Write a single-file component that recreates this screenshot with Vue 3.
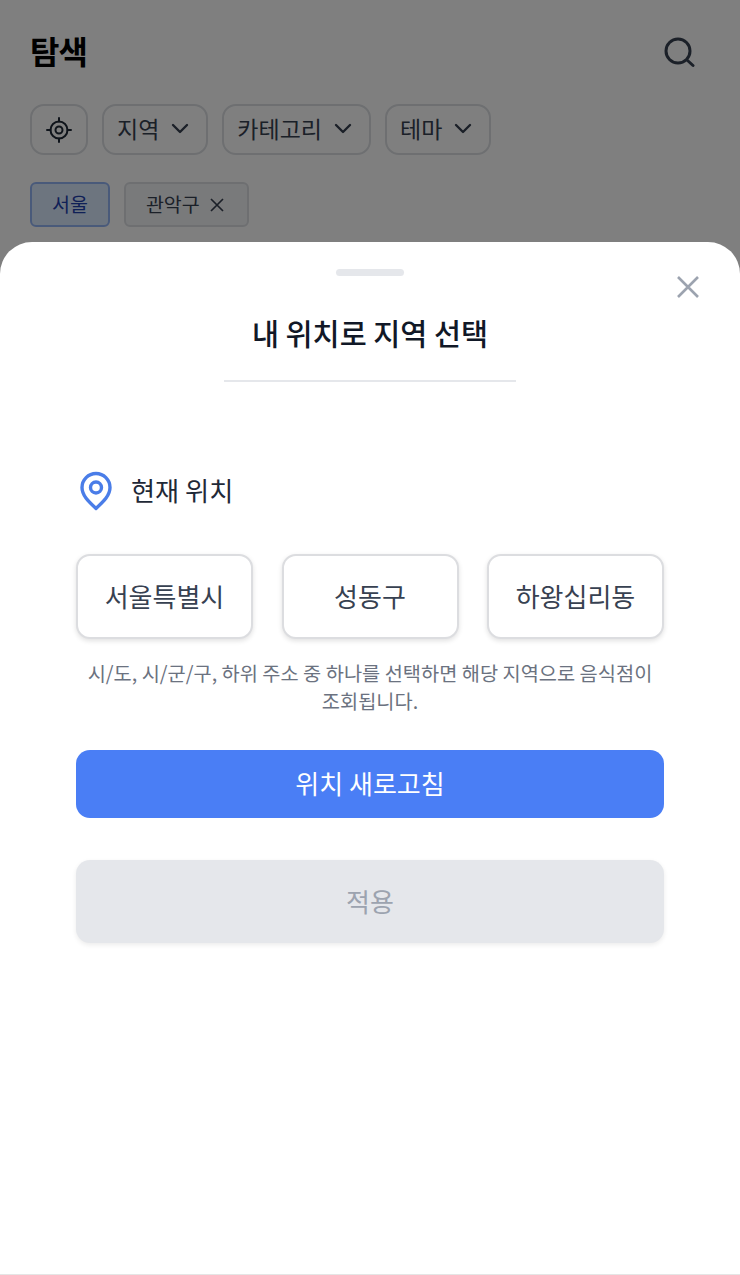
<template>
  <div class="screen">
    <div class="page">
      <header class="page__header">
        <h1 class="page__title">탐색</h1>
        <svg class="page__search" width="31" height="31" viewBox="0 0 31 31" fill="none" stroke="currentColor" stroke-width="3" stroke-linecap="round">
          <circle cx="14" cy="14" r="12" />
          <path d="M23 23l6 5.5" />
        </svg>
      </header>

      <div class="filters">
        <button class="filter filter--icon" type="button">
          <svg width="26" height="26" viewBox="0 0 26 26" fill="none" stroke="currentColor" stroke-width="2" stroke-linecap="round">
            <circle cx="13" cy="13" r="8.5" />
            <circle cx="13" cy="13" r="3.5" />
            <path d="M13 1v3.5M13 21.5V25M1 13h3.5M21.5 13H25" />
          </svg>
        </button>
        <button v-for="f in filters" :key="f" class="filter" type="button">
          {{ f }}
          <svg width="18" height="12" viewBox="0 0 18 12" fill="none" stroke="currentColor" stroke-width="2.4" stroke-linecap="round" stroke-linejoin="round">
            <path d="M2 2l7 7 7-7" />
          </svg>
        </button>
      </div>

      <div class="tags">
        <span class="tag tag--active">서울</span>
        <span class="tag">
          관악구
          <svg width="14" height="14" viewBox="0 0 14 14" fill="none" stroke="currentColor" stroke-width="1.7">
            <path d="M1 1l12 12M13 1L1 13" />
          </svg>
        </span>
      </div>
    </div>

    <div class="overlay"></div>

    <section class="sheet">
      <div class="sheet__handle"></div>
      <button class="sheet__close" type="button">
        <svg width="24" height="24" viewBox="0 0 24 24" fill="none" stroke="currentColor" stroke-width="2.6">
          <path d="M2 2l20 20M22 2L2 22" />
        </svg>
      </button>
      <h2 class="sheet__title">내 위치로 지역 선택</h2>
      <div class="sheet__divider"></div>

      <div class="sheet__body">
        <div class="location">
          <svg width="34" height="40" viewBox="0 0 34 40" fill="none" stroke="#4a7de8" stroke-width="3.4" stroke-linejoin="round">
            <path d="M17 37.5C9.5 30.5 3 24.5 3 16.5a14 14 0 0 1 28 0c0 8-6.5 14-14 21z" />
            <circle cx="17" cy="16.5" r="5.5" />
          </svg>
          <span class="location__label">현재 위치</span>
        </div>

        <div class="regions">
          <button v-for="r in regions" :key="r" class="region" type="button">{{ r }}</button>
        </div>

        <p class="hint">시/도, 시/군/구, 하위 주소 중 하나를 선택하면 해당 지역으로 음식점이 조회됩니다.</p>

        <button class="btn btn--primary" type="button">위치 새로고침</button>
        <button class="btn btn--disabled" type="button">적용</button>
      </div>
    </section>

    <div class="bottom-line"></div>
  </div>
</template>

<script setup>
const filters = ['지역', '카테고리', '테마']
const regions = ['서울특별시', '성동구', '하왕십리동']
</script>

<style>
html, body { margin: 0; background: #fff; }
</style>

<style scoped>
.screen {
  position: relative;
  width: 740px;
  height: 1275px;
  overflow: hidden;
  background: #fff;
  font-family: "Noto Sans CJK KR", "Noto Sans", sans-serif;
  color: #1f2430;
}
button { font-family: inherit; padding: 0; }

.page { padding: 0 30px; }
.page__header {
  display: flex;
  align-items: center;
  justify-content: space-between;
  height: 104px;
  padding-right: 15px;
}
.page__title {
  margin: 0 0 4px;
  font-size: 32px;
  font-weight: 700;
  letter-spacing: -1px;
  color: #000;
}
.page__search { color: #374151; }

.filters { display: flex; gap: 14px; }
.filter {
  display: flex;
  align-items: center;
  gap: 12px;
  height: 51px;
  padding: 0 17px 3px 13px;
  background: #fff;
  border: 2px solid #dcdfe3;
  border-radius: 14px;
  font-size: 23px;
  color: #374151;
}
.filter svg { margin-top: 2px; }
.filter--icon { width: 58px; justify-content: center; padding: 0; color: #1f2937; }
.filter--icon svg { margin-top: 0; }

.tags { display: flex; gap: 14px; margin-top: 27px; }
.tag {
  display: flex;
  align-items: center;
  gap: 10px;
  box-sizing: border-box;
  height: 45px;
  padding: 0 23px 2px 20px;
  background: #f3f4f6;
  border: 2px solid #dcdfe3;
  border-radius: 6px;
  font-size: 19.5px;
  color: #374151;
}
.tag svg { margin-top: 2px; }
.tag--active {
  padding: 0 20px 2px;
  background: #dbeafe;
  border-color: #93b4f5;
  color: #1e40af;
}

.overlay {
  position: absolute;
  inset: 0;
  background: rgba(0, 0, 0, 0.5);
}

.sheet {
  position: absolute;
  left: 0;
  right: 0;
  top: 242px;
  bottom: 0;
  background: #fff;
  border-radius: 32px 32px 0 0;
}
.sheet__handle {
  width: 68px;
  height: 7px;
  margin: 27px auto 0;
  background: #e5e7eb;
  border-radius: 4px;
}
.sheet__close {
  position: absolute;
  top: 33px;
  right: 40px;
  width: 24px;
  height: 24px;
  background: none;
  border: 0;
  color: #9ca3af;
}
.sheet__title {
  margin: 36px 0 0;
  height: 40px;
  line-height: 40px;
  text-align: center;
  font-size: 29.4px;
  font-weight: 500;
  color: #111827;
}
.sheet__divider {
  width: 292px;
  height: 2px;
  margin: 28px auto 0;
  background: #e5e7eb;
}
.sheet__body { padding: 89px 76px 0; }

.location { display: flex; align-items: center; gap: 18px; padding-left: 3px; height: 40px; }
.location__label { font-size: 26.2px; color: #1f2937; margin-bottom: 2px; }

.regions {
  display: grid;
  grid-template-columns: repeat(3, 177px);
  justify-content: space-between;
  margin-top: 43px;
}
.region {
  height: 85px;
  padding-bottom: 2px;
  background: #fff;
  border: 2px solid #dcdde0;
  border-radius: 14px;
  box-shadow: 0 2px 5px rgba(0, 0, 0, 0.12);
  font-size: 26px;
  color: #374151;
}

.hint {
  margin: 20px 0 0;
  padding: 0 8px;
  font-size: 19.75px;
  line-height: 28px;
  text-align: center;
  color: #6b7280;
}

.btn {
  display: block;
  width: 100%;
  padding-bottom: 3px;
  border: 0;
  border-radius: 14px;
  font-size: 26px;
}
.btn--primary {
  height: 68px;
  margin-top: 35px;
  background: #4a7ef5;
  color: #fff;
}
.btn--disabled {
  height: 83px;
  margin-top: 42px;
  background: #e5e7eb;
  color: #9ca3af;
  box-shadow: 0 2px 5px rgba(0, 0, 0, 0.08);
}
.bottom-line {
  position: absolute;
  left: 0;
  right: 0;
  bottom: 0;
  height: 1px;
  background: #e5e5e5;
}
</style>
